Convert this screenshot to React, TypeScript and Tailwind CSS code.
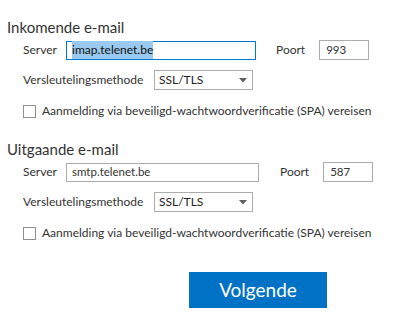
const font = { fontFamily: 'Lato, "Noto Sans", sans-serif' };

function Select() {
  return (
    <div className="flex h-[20px] w-[99px] items-center justify-between border border-[#acacac] bg-white pl-[4px] pr-[5px] text-[12px] text-[#222]">
      <span>SSL/TLS</span>
      <svg width="8" height="5" viewBox="0 0 8 5" className="fill-[#606060]">
        <polygon points="0,0 8,0 4,4.5" />
      </svg>
    </div>
  );
}

function Checkbox() {
  return (
    <label className="flex items-center gap-[6px] text-[12px] leading-[18px] text-[#333]">
      <span className="h-[13px] w-[13px] border border-[#8f8f8f] bg-white" />
      Aanmelding via beveiligd-wachtwoordverificatie (SPA) vereisen
    </label>
  );
}

function Section({
  title,
  server,
  port,
  focused,
  inputWidth,
  portGap,
}: {
  title: string;
  server: string;
  port: string;
  focused?: boolean;
  inputWidth: string;
  portGap: string;
}) {
  return (
    <section>
      <h2 className="pl-[7px] text-[15px] leading-[20px] text-[#333]">{title}</h2>
      <div className="mt-[3px] flex items-center pl-[23px] text-[12px] text-[#333]">
        <span className="w-[43px]">Server</span>
        <div
          className={`flex h-[19px] items-center border bg-white pl-[5px] ${inputWidth} ${
            focused ? "border-[#0078d7]" : "border-[#acacac]"
          }`}
        >
          <span className={focused ? "bg-[#99c9ef] text-[#111]" : "text-[11.5px] text-[#333]"}>{server}</span>
        </div>
        <span className={portGap}>Poort</span>
        <div className="ml-[14px] flex h-[20px] w-[50px] items-center border border-[#acacac] pl-[6px] text-[11.5px]">
          {port}
        </div>
      </div>
      <div className="mt-[10px] flex items-center pl-[23px] text-[12px] text-[#333]">
        <span className="w-[131px]">Versleutelingsmethode</span>
        <Select />
      </div>
      <div className="mt-[12px] pl-[23px]">
        <Checkbox />
      </div>
    </section>
  );
}

export default function App() {
  return (
    <div className="h-[316px] w-[416px] bg-white pt-[17px]" style={font}>
      <Section
        title="Inkomende e-mail"
        server="imap.telenet.be"
        port="993"
        focused
        inputWidth="w-[190px]"
        portGap="ml-[20px]"
      />
      <div className="mt-[19px]">
        <Section
          title="Uitgaande e-mail"
          server="smtp.telenet.be"
          port="587"
          inputWidth="w-[193px]"
          portGap="ml-[21px]"
        />
      </div>
      <div className="mt-[30px] flex pl-[189px]">
        <button className="h-[36px] w-[138px] bg-[#0072c6] text-[19px] text-white">Volgende</button>
      </div>
    </div>
  );
}
